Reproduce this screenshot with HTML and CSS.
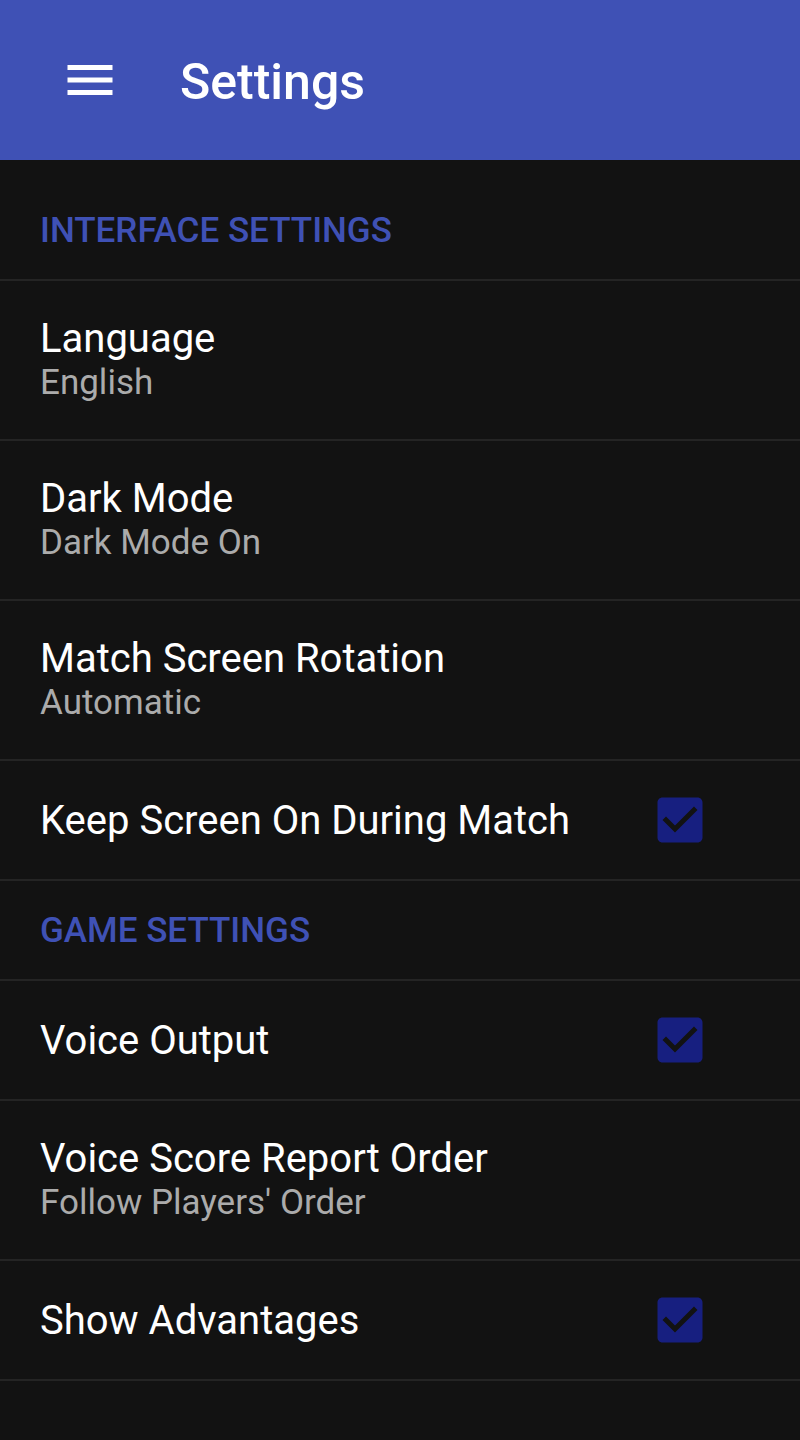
FILE: index.html
```html
<!DOCTYPE html>
<html lang="en">
<head>
<meta charset="utf-8">
<title>Settings</title>
<link rel="stylesheet" href="styles.css">
</head>
<body>
<header class="toolbar">
  <svg class="menu-icon" viewBox="0 0 24 24" width="60" height="60" aria-hidden="true">
    <path fill="#fff" d="M3 18h18v-2H3v2zm0-5h18v-2H3v2zm0-7v2h18V6H3z"/>
  </svg>
  <h1 class="toolbar-title">Settings</h1>
</header>
<main class="prefs">
  <div class="category first">INTERFACE SETTINGS</div>
  <div class="pref two-line">
    <div class="pref-title">Language</div>
    <div class="pref-summary">English</div>
  </div>
  <div class="pref two-line">
    <div class="pref-title">Dark Mode</div>
    <div class="pref-summary">Dark Mode On</div>
  </div>
  <div class="pref two-line">
    <div class="pref-title">Match Screen Rotation</div>
    <div class="pref-summary">Automatic</div>
  </div>
  <div class="pref one-line">
    <div class="pref-title">Keep Screen On During Match</div>
    <svg class="check" viewBox="0 0 24 24" width="60" height="60" aria-hidden="true"><path d="M19 3H5c-1.11 0-2 .9-2 2v14c0 1.1.89 2 2 2h14c1.11 0 2-.9 2-2V5c0-1.1-.89-2-2-2zm-9 14l-5-5 1.41-1.41L10 14.17l7.59-7.59L19 8l-9 9z"/></svg>
  </div>
  <div class="category">GAME SETTINGS</div>
  <div class="pref one-line">
    <div class="pref-title">Voice Output</div>
    <svg class="check" viewBox="0 0 24 24" width="60" height="60" aria-hidden="true"><path d="M19 3H5c-1.11 0-2 .9-2 2v14c0 1.1.89 2 2 2h14c1.11 0 2-.9 2-2V5c0-1.1-.89-2-2-2zm-9 14l-5-5 1.41-1.41L10 14.17l7.59-7.59L19 8l-9 9z"/></svg>
  </div>
  <div class="pref two-line">
    <div class="pref-title">Voice Score Report Order</div>
    <div class="pref-summary">Follow Players' Order</div>
  </div>
  <div class="pref one-line">
    <div class="pref-title">Show Advantages</div>
    <svg class="check" viewBox="0 0 24 24" width="60" height="60" aria-hidden="true"><path d="M19 3H5c-1.11 0-2 .9-2 2v14c0 1.1.89 2 2 2h14c1.11 0 2-.9 2-2V5c0-1.1-.89-2-2-2zm-9 14l-5-5 1.41-1.41L10 14.17l7.59-7.59L19 8l-9 9z"/></svg>
  </div>
</main>
</body>
</html>
```

FILE: styles.css
```css
html, body {
  margin: 0;
  padding: 0;
  background: #121212;
  font-family: Roboto, "Noto Sans", "Liberation Sans", sans-serif;
  min-height: 1440px;
}

.toolbar {
  height: 160px;
  background: #3f51b5;
  display: flex;
  align-items: center;
  padding-left: 60px;
  box-sizing: border-box;
}

.menu-icon {
  display: block;
  flex: none;
}

.toolbar-title {
  margin: 4px 0 0 60px;
  color: #fff;
  font-size: 50px;
  font-weight: 500;
  line-height: 60px;
}

.prefs {
  display: flex;
  flex-direction: column;
}

.category {
  box-sizing: border-box;
  height: 100px;
  border-bottom: 2px solid #242424;
  padding-left: 40px;
  display: flex;
  align-items: center;
  color: #3f51b5;
  font-size: 35px;
  font-weight: 500;
}

.category.first {
  margin-top: 21px;
}

.pref {
  box-sizing: border-box;
  border-bottom: 2px solid #242424;
  padding: 0 90px 0 40px;
  display: flex;
}

.pref.two-line {
  height: 160px;
  flex-direction: column;
  padding-top: 34px;
}

.pref.one-line {
  height: 120px;
  align-items: center;
  justify-content: space-between;
}

.pref-title {
  color: #fff;
  font-size: 40px;
  line-height: 47px;
}

.pref-summary {
  color: #ababab;
  font-size: 35px;
  line-height: 42px;
}

.check {
  display: block;
  flex: none;
  fill: #171f80;
}
```
